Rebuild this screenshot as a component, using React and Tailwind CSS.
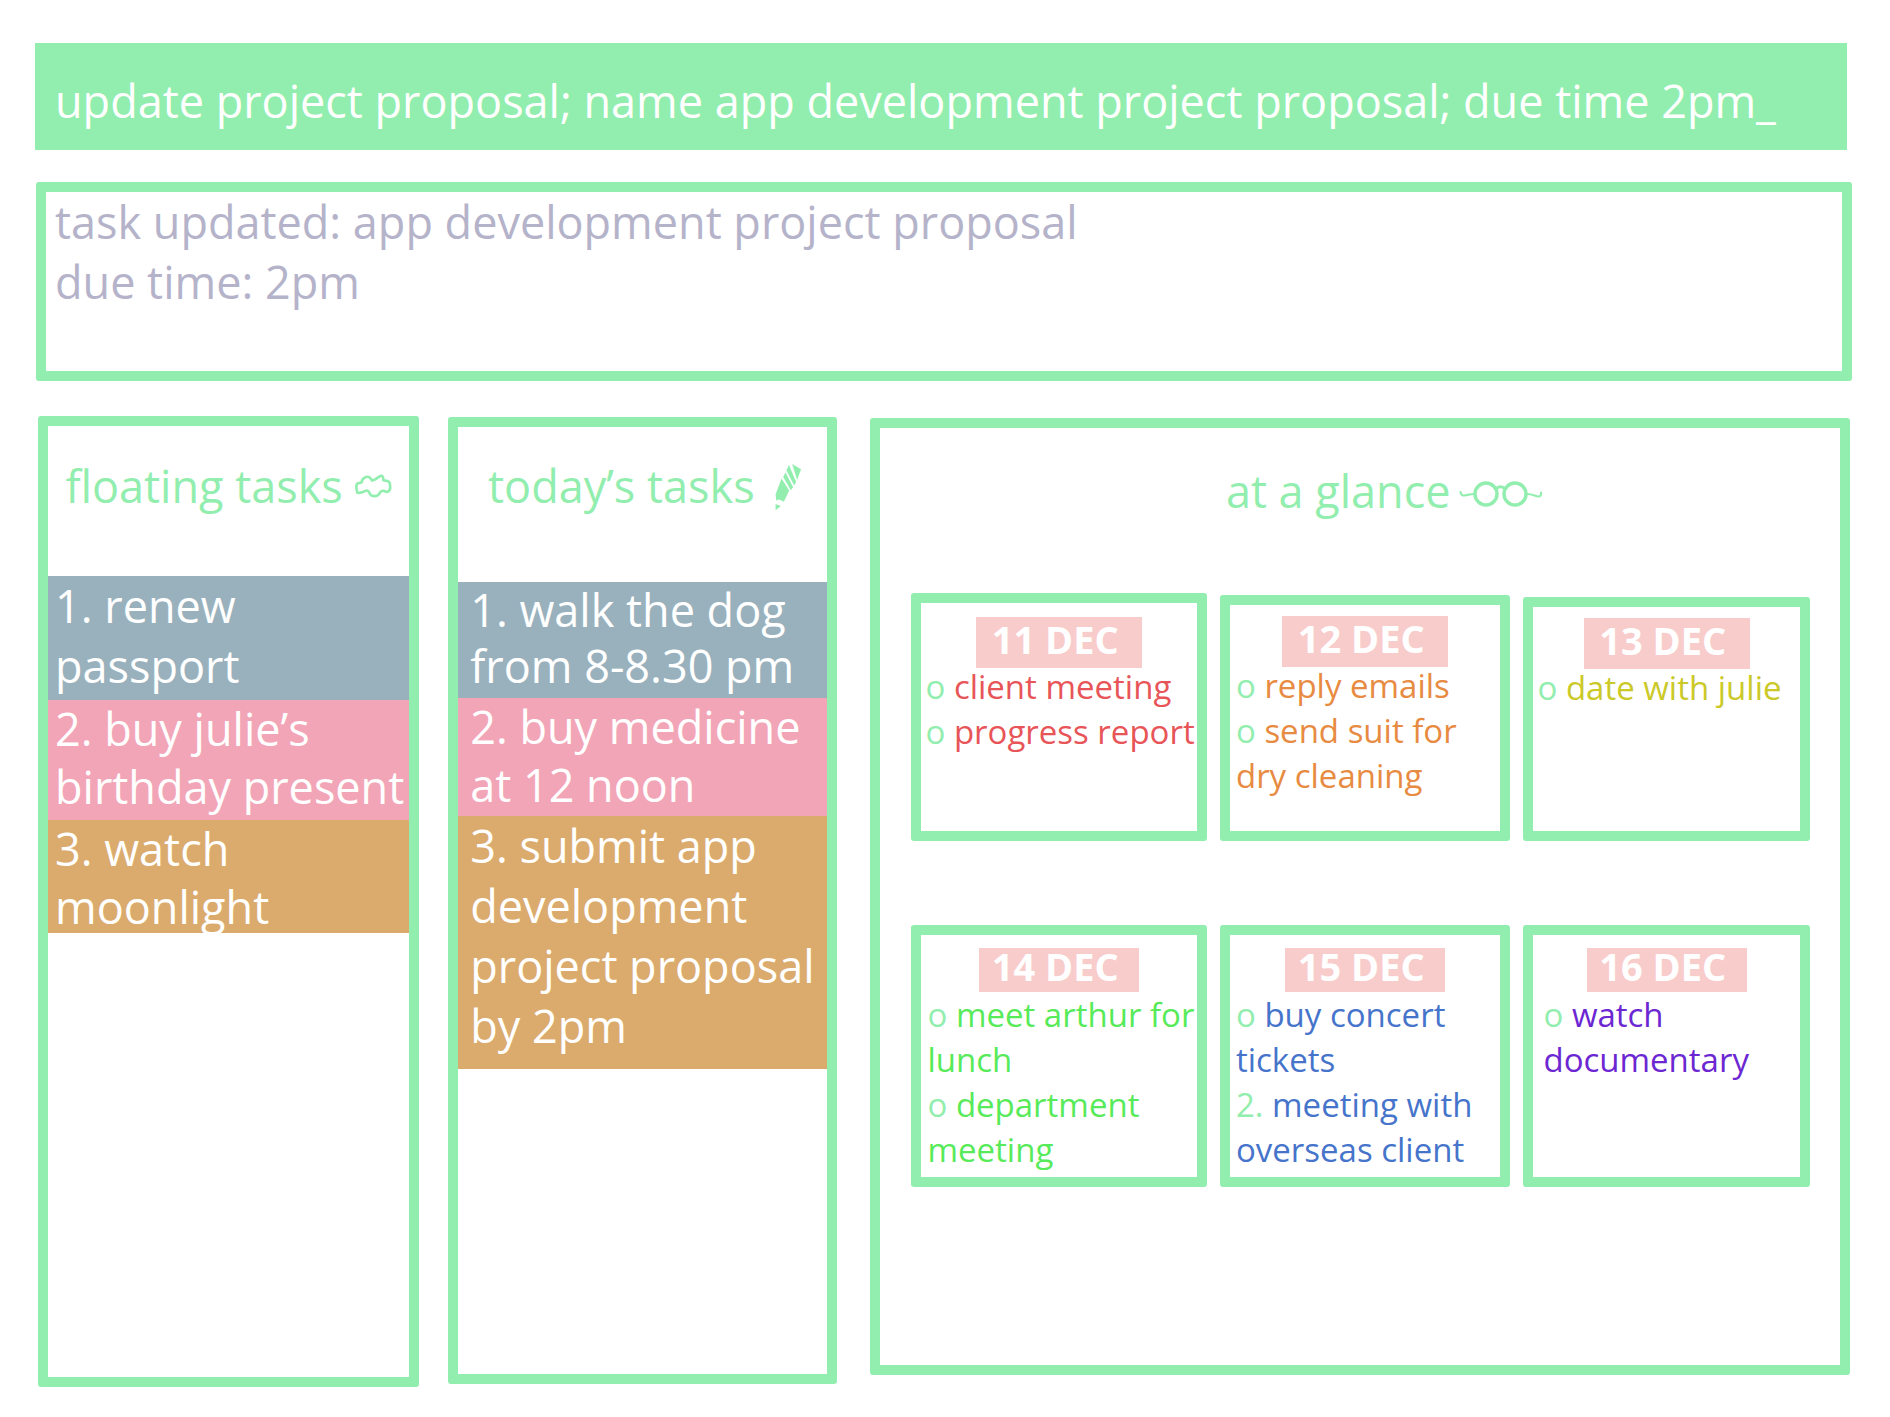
import React from "react";

const floatingTasks = [
  { text: "1. renew\npassport", style: "bg-[#99b1bd] h-[124px] leading-[60px]" },
  { text: "2. buy julie’s\nbirthday present", style: "bg-[#f2a5b7] h-[120px] leading-[58px]" },
  { text: "3. watch\nmoonlight", style: "bg-[#dbab6d] h-[113px] leading-[58px]" },
];

const todaysTasks = [
  { text: "1. walk the dog\nfrom 8-8.30 pm", style: "bg-[#99b1bd] h-[116px] leading-[56px]" },
  { text: "2. buy medicine\nat 12 noon", style: "bg-[#f2a5b7] h-[118px] leading-[58px]" },
  {
    text: "3. submit app\ndevelopment\nproject proposal\nby 2pm",
    style: "bg-[#dbab6d] h-[253px] leading-[60px]",
  },
];

const days = [
  {
    date: "11 DEC",
    color: "text-[#e85558]",
    card: "pt-[14px]",
    badge: "h-[51px] w-[166px] -mb-1",
    list: "pl-[4px]",
    items: [["o", "client meeting"], ["o", "progress report"]],
  },
  {
    date: "12 DEC",
    color: "text-[#e88b42]",
    card: "mt-0.5 pt-[11px]",
    badge: "h-[51px] w-[166px] -mb-1",
    list: "pl-[6px]",
    items: [["o", "reply emails"], ["o", "send suit for\ndry cleaning"]],
  },
  {
    date: "13 DEC",
    color: "text-[#cbc928]",
    card: "mt-1 pt-[11px]",
    badge: "h-[51px] w-[166px] -mb-1",
    list: "pl-[4px]",
    items: [["o", "date with julie"]],
  },
  {
    date: "14 DEC",
    color: "text-[#57ea59]",
    card: "pt-[13px]",
    badge: "h-[44px] w-[160px]",
    list: "pl-[6px]",
    items: [["o", "meet arthur for\nlunch"], ["o", "department\nmeeting"]],
  },
  {
    date: "15 DEC",
    color: "text-[#4674cb]",
    card: "pt-[13px]",
    badge: "h-[44px] w-[160px]",
    list: "pl-[6px]",
    items: [["o", "buy concert\ntickets"], ["2.", "meeting with\noverseas client"]],
  },
  {
    date: "16 DEC",
    color: "text-[#6c27d2]",
    card: "pt-[13px]",
    badge: "h-[44px] w-[160px]",
    list: "pl-[10px]",
    items: [["o", "watch\ndocumentary"]],
  },
];

function CloudIcon() {
  return (
    <svg className="h-[24px] w-[37px] shrink-0" viewBox="45 59 110 73" fill="none" stroke="currentColor" strokeWidth="8" strokeLinejoin="round" aria-hidden="true">
      <path d="M51 116C47 104 46 89 53 87L64 85C64 72 80 64 88 69L96 79L104 76L119 66C128 62 130 68 130 78C141 79 152 82 150 93C152 104 150 112 141 114L130 110C120 108 120 118 116 121C112 128 94 128 90 121C86 112 82 106 74 111C68 116 60 117 51 116Z" />
    </svg>
  );
}

function PencilIcon() {
  return (
    <svg className="mt-0.5 h-[47px] w-[27px] shrink-0" viewBox="72 38 80 142" fill="currentColor" aria-hidden="true">
      <path d="M123 38L150 54L138 86Z" />
      <path d="M113 40L135 92L129 103L106 58Z" />
      <path d="M103 64L126 108L119 117L96 77Z" />
      <path d="M91 82L114 118L98 152L84 145L75 148L73 130Z" />
      <path d="M73 159L89 165L73 178Z" />
    </svg>
  );
}

function GlassesIcon() {
  return (
    <svg className="mt-1 h-[27px] w-[84px] shrink-0" viewBox="0 0 84 27" fill="none" stroke="currentColor" strokeLinecap="round" aria-hidden="true">
      <circle cx="27" cy="14" r="11" strokeWidth="3.400" />
      <circle cx="56" cy="14" r="11" strokeWidth="3.400" />
      <path d="M37.500 8.500Q41.500 5 45.500 8.500" strokeWidth="3" />
      <path d="M15 14C10 14 8 15.500 4 15.500Q2.500 15.500 1.500 12" strokeWidth="2.200" />
      <path d="M68 14C73 14 76 16 79.500 16.500Q82.500 16.500 82 12.500" strokeWidth="2.200" />
    </svg>
  );
}

function TaskList({ tasks, className }) {
  return (
    <ul className={className}>
      {tasks.map((task) => (
        <li key={task.text} className={`whitespace-pre text-white ${task.style}`}>
          {task.text}
        </li>
      ))}
    </ul>
  );
}

function DayCard({ day }) {
  return (
    <article className={`min-w-0 rounded-[3px] border-[10px] border-[#92eeae] ${day.card}`}>
      <h3 className={`mx-auto flex items-center justify-center bg-[#f8cccb] pr-2 pb-2 text-[38px] leading-none font-bold text-white ${day.badge}`}>
        {day.date}
      </h3>
      <ul className={`text-[33px] leading-[45px] ${day.list}`}>
        {day.items.map(([marker, text]) => (
          <li key={text} className={`whitespace-pre ${day.color}`}>
            <span className="text-[#92eeae]">{marker}</span> {text}
          </li>
        ))}
      </ul>
    </article>
  );
}

export default function App() {
  return (
    <main className="bg-white pt-[43px] pr-[38px] pb-[30px] pl-[35px] font-['Open_Sans','Noto_Sans',sans-serif] text-[45px] leading-[60px]">
      <div className="mr-[5px]">
        <input
          type="text"
          aria-label="Command"
          defaultValue="update project proposal; name app development project proposal; due time 2pm_"
          className="block h-[107px] w-full bg-[#92eeae] pt-[8px] pl-[20px] text-white outline-none"
        />
      </div>
      <section aria-live="polite" className="mt-[32px] ml-px min-h-[199px] rounded-[3px] border-[10px] border-[#92eeae] pl-[9px] text-[#b5b3ca]">
        <p>task updated: app development project proposal</p>
        <p>due time: 2pm</p>
      </section>
      <div className="mt-[35px] mr-0.5 ml-[3px] grid grid-cols-[381fr_389fr_983fr] items-start gap-x-[29px]">
        <section className="min-h-[971px] min-w-0 rounded-[3px] border-[10px] border-[#92eeae] pt-[30px]">
          <h2 className="flex items-center justify-center gap-[12px] whitespace-nowrap text-[#92eeae]">
            floating tasks <CloudIcon />
          </h2>
          <TaskList tasks={floatingTasks} className="mt-[60px] [&>li]:pl-[7px]" />
        </section>
        <section className="mt-px min-h-[967px] min-w-0 rounded-[3px] border-[10px] border-[#92eeae] pt-[29px]">
          <h2 className="flex items-center justify-center gap-[20px] pl-[4px] whitespace-nowrap text-[#92eeae]">
            today’s tasks <PencilIcon />
          </h2>
          <TaskList tasks={todaysTasks} className="mt-[66px] [&>li]:pl-[12px]" />
        </section>
        <section className="mt-0.5 ml-1 min-h-[957px] min-w-0 rounded-[3px] border-[10px] border-[#92eeae] pt-[33px]">
          <h2 className="flex items-center justify-center gap-[8px] pl-[48px] whitespace-nowrap text-[#92eeae]">
            at a glance <GlassesIcon />
          </h2>
          <div className="mt-[72px] grid grid-cols-[296fr_291fr_287fr] grid-rows-[248px_262px] gap-x-[13px] gap-y-[84px] pr-[30px] pl-[31px]">
            {days.map((day) => (
              <DayCard key={day.date} day={day} />
            ))}
          </div>
        </section>
      </div>
    </main>
  );
}
